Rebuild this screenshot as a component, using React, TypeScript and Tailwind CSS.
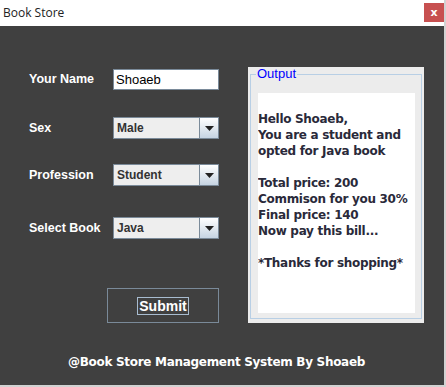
const labelCls =
  "w-[84px] shrink-0 text-[12.5px] font-bold text-white font-['Liberation_Sans',Arial,sans-serif]";

const Combo = ({ value }: { value: string }) => (
  <div className="flex h-[22px] w-[106px] border border-[#7a8a99] bg-[#eeeeee]">
    <div className="flex flex-1 items-center pl-[3px] text-[12px] font-bold text-[#333333] font-['Liberation_Sans',Arial,sans-serif]">
      {value}
    </div>
    <div className="flex w-[19px] items-center justify-center border-l border-[#7a8a99] bg-gradient-to-b from-white to-[#c6d4e2]">
      <svg width="9" height="5" viewBox="0 0 9 5">
        <path d="M0 0h9L4.5 5z" fill="#222" />
      </svg>
    </div>
  </div>
);

const outputLines = [
  "",
  "Hello Shoaeb,",
  "You are a student and",
  "opted for Java book",
  "",
  "Total price: 200",
  "Commison for you 30%",
  "Final price: 140",
  "Now pay this bill...",
  "",
  "*Thanks for shopping*",
];

const App = () => {
  return (
    <div className="flex h-[387px] w-[446px] flex-col border-b-2 border-r-2 border-[#d2d2d2] bg-[#404040]">
      {/* title bar */}
      <div className="flex h-[26px] shrink-0 items-start justify-between bg-white">
        <div className="pl-[3px] pt-[5px] text-[12px] leading-[15px] text-[#222] font-['Open_Sans',sans-serif]">
          Book Store
        </div>
        <div className="mt-[3px] flex h-[19px] w-[20px] items-center justify-center bg-[#c75050] text-[11px] font-bold leading-none text-white font-['DejaVu_Sans',sans-serif]">
          x
        </div>
      </div>

      <div className="flex">
        {/* form */}
        <div className="flex w-[248px] flex-col pl-[29px] pt-[43px]">
          <div className="flex h-[21px] items-center">
            <div className={labelCls}>Your Name</div>
            <div className="flex h-[21px] w-[106px] items-center border border-[#7a8a99] bg-white pl-[2px] text-[13px] text-black font-['Liberation_Sans',Arial,sans-serif]">
              Shoaeb
            </div>
          </div>
          <div className="mt-[27px] flex h-[22px] items-center">
            <div className={labelCls}>Sex</div>
            <Combo value="Male" />
          </div>
          <div className="mt-[25px] flex h-[22px] items-center">
            <div className={labelCls}>Profession</div>
            <Combo value="Student" />
          </div>
          <div className="mt-[31px] flex h-[22px] items-center">
            <div className={labelCls}>Select Book</div>
            <Combo value="Java" />
          </div>
          <div className="ml-[78px] mt-[49px] flex h-[35px] w-[112px] items-center justify-center border border-[#7a8a99]">
            <div className="border border-[#a8bcd0] px-[1px] text-[14px] font-bold leading-[16px] text-white font-['Liberation_Sans',Arial,sans-serif]">
              Submit
            </div>
          </div>
        </div>

        {/* output panel */}
        <div className="mt-[41px] flex h-[256px] w-[176px] flex-col bg-[#ececec] px-[2px] pb-[4px]">
          <fieldset className="flex min-h-0 min-w-0 flex-1 flex-col border border-[#b8cfe5] pb-[5px] pl-[7px] pr-[6px]">
            <legend className="-ml-[2px] px-[1px] text-[13px] leading-[14px] text-[#0000ff] font-['Liberation_Sans',Arial,sans-serif]">
              Output
            </legend>
            <div className="mt-[12px] flex-1 overflow-hidden bg-white pt-[2px] text-[12px] font-bold leading-[16px] text-[#2a2a3a] font-['DejaVu_Sans',sans-serif] tracking-[-0.3px]">
              {outputLines.map((l, i) => (
                <div key={i} className="h-[16px] whitespace-pre">
                  {l}
                </div>
              ))}
            </div>
          </fieldset>
        </div>
      </div>

      <div className="mt-[32px] pl-[68px] text-[12px] font-bold leading-[14px] text-white font-['DejaVu_Sans',sans-serif] tracking-[-0.3px]">
        @Book Store Management System By Shoaeb
      </div>
    </div>
  );
};

export default App;
